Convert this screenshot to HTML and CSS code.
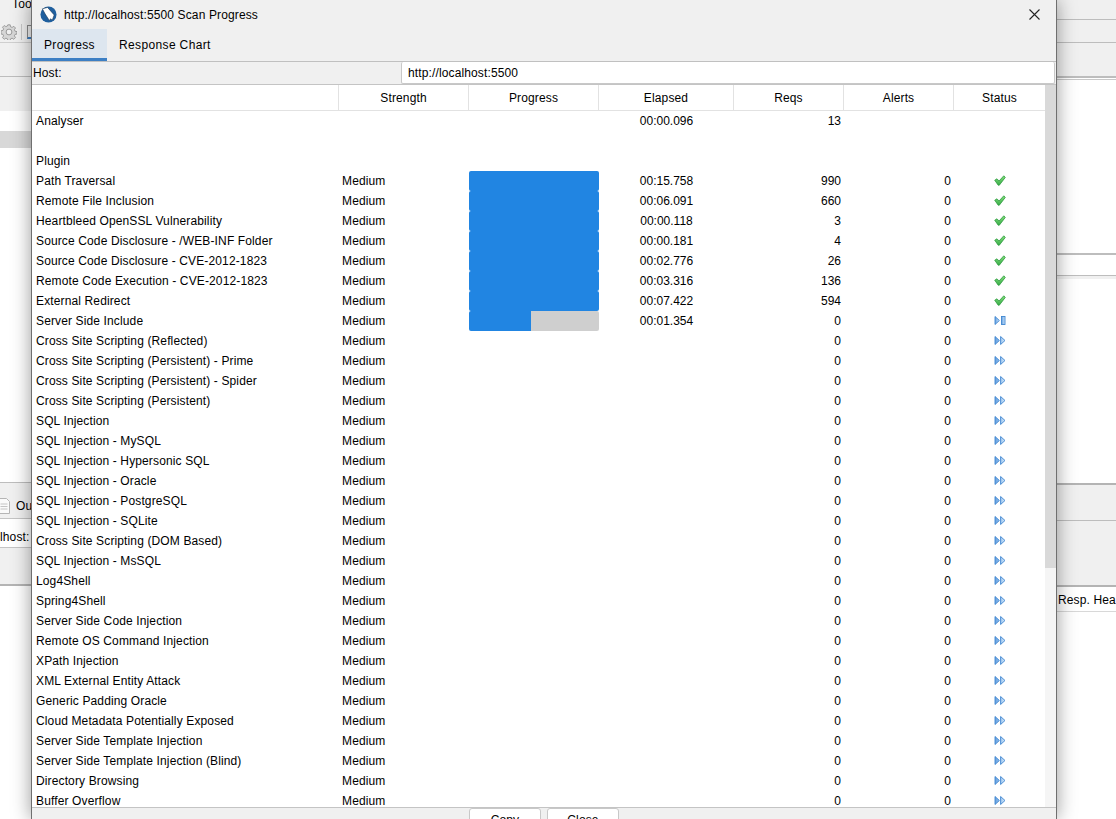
FILE: index.html
```html
<!DOCTYPE html>
<html lang="en">
<head>
<meta charset="utf-8">
<title>Scan Progress</title>
<link rel="stylesheet" href="styles.css">
</head>
<body>
<svg class="defs" width="0" height="0" aria-hidden="true">
  <defs>
    <linearGradient id="g" x1="0" y1="0" x2="0" y2="1"><stop offset="0" stop-color="#84de7c"/><stop offset="1" stop-color="#37ad48"/></linearGradient>
    <linearGradient id="b" x1="0" y1="0" x2="1" y2="0"><stop offset="0" stop-color="#639fe0"/><stop offset="1" stop-color="#d2e8fb"/></linearGradient>
    <symbol id="ok" viewBox="0 0 12 11"><path d="M0.7 5.2 L3 3.8 L5 6 L9.8 0.8 L11.3 2.4 L5.3 10.2 H4.2 Z" fill="url(#g)" stroke="#2f9a40" stroke-width=".8"/></symbol>
    <symbol id="pend" viewBox="0 0 12 10"><path d="M1 1 L5.400 5 L1 9 Z M6.600 1 L11 5 L6.600 9 Z" fill="url(#b)" stroke="#3f86d0" stroke-width=".9"/></symbol>
    <symbol id="run" viewBox="0 0 12 10"><path d="M1 1 L5.400 5 L1 9 Z" fill="url(#b)" stroke="#3f86d0" stroke-width=".9"/><rect x="7.500" y="1" width="3.500" height="8" fill="url(#b)" stroke="#3f86d0" stroke-width=".9"/></symbol>
  </defs>
</svg>
<div class="desk">
  <div class="pane left">
    <div class="band b-menu"><span class="clip-text">Tools</span></div>
    <div class="band b-tools">
      <svg class="gear" viewBox="0 0 16 16"><path d="M6.800.8h2.400l.4 2 1.500.6 1.700-1.100 1.700 1.700-1.100 1.700.6 1.500 2 .4v2.400l-2 .4-.6 1.500 1.100 1.700-1.700 1.700-1.700-1.100-1.500.6-.4 2H6.800l-.4-2-1.500-.6-1.700 1.100-1.700-1.700 1.100-1.700-.6-1.500-2-.4V6.800l2-.4.6-1.500L1.500 3.200l1.700-1.700 1.700 1.100 1.500-.6z" fill="#d6d6d6" stroke="#8e8e8e" stroke-width=".8"/><circle cx="8" cy="8" r="2.900" fill="#f0f0f0" stroke="#8e8e8e" stroke-width=".9"/></svg>
      <span class="tool-sep"></span>
      <span class="tool-stub"></span>
    </div>
    <div class="band b-l1"></div>
    <div class="band b-l2"></div>
    <div class="band b-l3"></div>
    <div class="band b-sel"></div>
    <div class="band b-l4"></div>
    <div class="band b-tabs">
      <svg class="doc" viewBox="0 0 12 16"><path d="M.5.5h8l3 3v12H.5z" fill="#fafafa" stroke="#b5b5b5"/><path d="M2.500 6h7M2.500 8.500h7M2.500 11h7" stroke="#c4c4c4"/></svg>
      <span class="tab-text">Ou</span>
    </div>
    <div class="band b-host"><span class="host-text">lhost:</span></div>
    <div class="band b-blank"></div>
    <div class="band b-white"></div>
  </div>
  <div class="pane right">
    <div class="band r1"></div>
    <div class="band r2"></div>
    <div class="band r3"></div>
    <div class="band r4"></div>
    <div class="band r5"></div>
    <div class="band r6"></div>
    <div class="band r6b"></div>
    <div class="band r7"></div>
    <div class="band r8"></div>
    <div class="band r9"></div>
    <div class="band r10">Resp. Hea</div>
    <div class="band r11"></div>
  </div>
</div>

<section class="dialog">
  <header class="titlebar">
    <svg class="logo" viewBox="0 0 18 18"><circle cx="9" cy="9" r="8.500" fill="#1f5f9e"/><path d="M2.500 3 L8 1.500 L15 9.500 L13 15 L11.200 13.500 L10 15.500 L5.500 8.500 Z" fill="#fff" stroke="#16324f" stroke-width=".6"/></svg>
    <span class="title">http://localhost:5500 Scan Progress</span>
    <svg class="close" viewBox="0 0 11 11"><path d="M.5.500 10.500 10.500M10.500.500 .500 10.500" stroke="#222" stroke-width="1.100" fill="none"/></svg>
  </header>
  <nav class="tabs">
    <span class="tab active">Progress</span>
    <span class="tab">Response Chart</span>
  </nav>
  <div class="hostrow">
    <label class="hostlabel">Host:</label>
    <div class="hostinput">http://localhost:5500</div>
  </div>
  <div class="tablewrap">
    <div class="table">
      <div class="row head"><span></span><span>Strength</span><span>Progress</span><span>Elapsed</span><span>Reqs</span><span>Alerts</span><span>Status</span></div>
      <div class="rows">
        <div class="row"><span class="name">Analyser</span><span></span><span></span><span class="time">00:00.096</span><span class="num">13</span><span></span><span></span></div>
        <div class="row"><span></span><span></span><span></span><span></span><span></span><span></span><span></span></div>
        <div class="row"><span class="name">Plugin</span><span></span><span></span><span></span><span></span><span></span><span></span></div>
        <div class="row"><span class="name">Path Traversal</span><span class="str">Medium</span><span class="prog"><i class="fill full"></i></span><span class="time">00:15.758</span><span class="num">990</span><span class="num">0</span><span class="st"><svg class="ic"><use href="#ok"/></svg></span></div>
        <div class="row"><span class="name">Remote File Inclusion</span><span class="str">Medium</span><span class="prog"><i class="fill full"></i></span><span class="time">00:06.091</span><span class="num">660</span><span class="num">0</span><span class="st"><svg class="ic"><use href="#ok"/></svg></span></div>
        <div class="row"><span class="name">Heartbleed OpenSSL Vulnerability</span><span class="str">Medium</span><span class="prog"><i class="fill full"></i></span><span class="time">00:00.118</span><span class="num">3</span><span class="num">0</span><span class="st"><svg class="ic"><use href="#ok"/></svg></span></div>
        <div class="row"><span class="name">Source Code Disclosure - /WEB-INF Folder</span><span class="str">Medium</span><span class="prog"><i class="fill full"></i></span><span class="time">00:00.181</span><span class="num">4</span><span class="num">0</span><span class="st"><svg class="ic"><use href="#ok"/></svg></span></div>
        <div class="row"><span class="name">Source Code Disclosure - CVE-2012-1823</span><span class="str">Medium</span><span class="prog"><i class="fill full"></i></span><span class="time">00:02.776</span><span class="num">26</span><span class="num">0</span><span class="st"><svg class="ic"><use href="#ok"/></svg></span></div>
        <div class="row"><span class="name">Remote Code Execution - CVE-2012-1823</span><span class="str">Medium</span><span class="prog"><i class="fill full"></i></span><span class="time">00:03.316</span><span class="num">136</span><span class="num">0</span><span class="st"><svg class="ic"><use href="#ok"/></svg></span></div>
        <div class="row"><span class="name">External Redirect</span><span class="str">Medium</span><span class="prog"><i class="fill full"></i></span><span class="time">00:07.422</span><span class="num">594</span><span class="num">0</span><span class="st"><svg class="ic"><use href="#ok"/></svg></span></div>
        <div class="row"><span class="name">Server Side Include</span><span class="str">Medium</span><span class="prog"><i class="fill part"></i></span><span class="time">00:01.354</span><span class="num">0</span><span class="num">0</span><span class="st"><svg class="ic"><use href="#run"/></svg></span></div>
        <div class="row"><span class="name">Cross Site Scripting (Reflected)</span><span class="str">Medium</span><span></span><span></span><span class="num">0</span><span class="num">0</span><span class="st"><svg class="ic"><use href="#pend"/></svg></span></div>
        <div class="row"><span class="name">Cross Site Scripting (Persistent) - Prime</span><span class="str">Medium</span><span></span><span></span><span class="num">0</span><span class="num">0</span><span class="st"><svg class="ic"><use href="#pend"/></svg></span></div>
        <div class="row"><span class="name">Cross Site Scripting (Persistent) - Spider</span><span class="str">Medium</span><span></span><span></span><span class="num">0</span><span class="num">0</span><span class="st"><svg class="ic"><use href="#pend"/></svg></span></div>
        <div class="row"><span class="name">Cross Site Scripting (Persistent)</span><span class="str">Medium</span><span></span><span></span><span class="num">0</span><span class="num">0</span><span class="st"><svg class="ic"><use href="#pend"/></svg></span></div>
        <div class="row"><span class="name">SQL Injection</span><span class="str">Medium</span><span></span><span></span><span class="num">0</span><span class="num">0</span><span class="st"><svg class="ic"><use href="#pend"/></svg></span></div>
        <div class="row"><span class="name">SQL Injection - MySQL</span><span class="str">Medium</span><span></span><span></span><span class="num">0</span><span class="num">0</span><span class="st"><svg class="ic"><use href="#pend"/></svg></span></div>
        <div class="row"><span class="name">SQL Injection - Hypersonic SQL</span><span class="str">Medium</span><span></span><span></span><span class="num">0</span><span class="num">0</span><span class="st"><svg class="ic"><use href="#pend"/></svg></span></div>
        <div class="row"><span class="name">SQL Injection - Oracle</span><span class="str">Medium</span><span></span><span></span><span class="num">0</span><span class="num">0</span><span class="st"><svg class="ic"><use href="#pend"/></svg></span></div>
        <div class="row"><span class="name">SQL Injection - PostgreSQL</span><span class="str">Medium</span><span></span><span></span><span class="num">0</span><span class="num">0</span><span class="st"><svg class="ic"><use href="#pend"/></svg></span></div>
        <div class="row"><span class="name">SQL Injection - SQLite</span><span class="str">Medium</span><span></span><span></span><span class="num">0</span><span class="num">0</span><span class="st"><svg class="ic"><use href="#pend"/></svg></span></div>
        <div class="row"><span class="name">Cross Site Scripting (DOM Based)</span><span class="str">Medium</span><span></span><span></span><span class="num">0</span><span class="num">0</span><span class="st"><svg class="ic"><use href="#pend"/></svg></span></div>
        <div class="row"><span class="name">SQL Injection - MsSQL</span><span class="str">Medium</span><span></span><span></span><span class="num">0</span><span class="num">0</span><span class="st"><svg class="ic"><use href="#pend"/></svg></span></div>
        <div class="row"><span class="name">Log4Shell</span><span class="str">Medium</span><span></span><span></span><span class="num">0</span><span class="num">0</span><span class="st"><svg class="ic"><use href="#pend"/></svg></span></div>
        <div class="row"><span class="name">Spring4Shell</span><span class="str">Medium</span><span></span><span></span><span class="num">0</span><span class="num">0</span><span class="st"><svg class="ic"><use href="#pend"/></svg></span></div>
        <div class="row"><span class="name">Server Side Code Injection</span><span class="str">Medium</span><span></span><span></span><span class="num">0</span><span class="num">0</span><span class="st"><svg class="ic"><use href="#pend"/></svg></span></div>
        <div class="row"><span class="name">Remote OS Command Injection</span><span class="str">Medium</span><span></span><span></span><span class="num">0</span><span class="num">0</span><span class="st"><svg class="ic"><use href="#pend"/></svg></span></div>
        <div class="row"><span class="name">XPath Injection</span><span class="str">Medium</span><span></span><span></span><span class="num">0</span><span class="num">0</span><span class="st"><svg class="ic"><use href="#pend"/></svg></span></div>
        <div class="row"><span class="name">XML External Entity Attack</span><span class="str">Medium</span><span></span><span></span><span class="num">0</span><span class="num">0</span><span class="st"><svg class="ic"><use href="#pend"/></svg></span></div>
        <div class="row"><span class="name">Generic Padding Oracle</span><span class="str">Medium</span><span></span><span></span><span class="num">0</span><span class="num">0</span><span class="st"><svg class="ic"><use href="#pend"/></svg></span></div>
        <div class="row"><span class="name">Cloud Metadata Potentially Exposed</span><span class="str">Medium</span><span></span><span></span><span class="num">0</span><span class="num">0</span><span class="st"><svg class="ic"><use href="#pend"/></svg></span></div>
        <div class="row"><span class="name">Server Side Template Injection</span><span class="str">Medium</span><span></span><span></span><span class="num">0</span><span class="num">0</span><span class="st"><svg class="ic"><use href="#pend"/></svg></span></div>
        <div class="row"><span class="name">Server Side Template Injection (Blind)</span><span class="str">Medium</span><span></span><span></span><span class="num">0</span><span class="num">0</span><span class="st"><svg class="ic"><use href="#pend"/></svg></span></div>
        <div class="row"><span class="name">Directory Browsing</span><span class="str">Medium</span><span></span><span></span><span class="num">0</span><span class="num">0</span><span class="st"><svg class="ic"><use href="#pend"/></svg></span></div>
        <div class="row"><span class="name">Buffer Overflow</span><span class="str">Medium</span><span></span><span></span><span class="num">0</span><span class="num">0</span><span class="st"><svg class="ic"><use href="#pend"/></svg></span></div>
      </div>
    </div>
    <div class="scrollbar"><div class="thumb"></div></div>
  </div>
  <footer class="foot">
    <button class="btn">Copy</button>
    <button class="btn">Close</button>
  </footer>
</section>
</body>
</html>
```
FILE: styles.css
```css
html, body { margin: 0; padding: 0; height: 819px; overflow: hidden; }
body { position: relative; width: 1116px; font: 12px/20px "Liberation Sans", Arial, sans-serif; letter-spacing: .13px; color: #000; background: #fff; }
.defs { position: absolute; }

.desk { display: flex; justify-content: space-between; height: 819px; }
.pane { display: flex; flex-direction: column; overflow: hidden; }
.left { width: 32px; }
.right { width: 59px; }
.band { box-sizing: border-box; flex: none; background: #f0f0f0; }

.b-menu { height: 20px; position: relative; overflow: hidden; }
.clip-text { position: absolute; left: 12px; top: -6px; }
.b-tools { height: 23px; border-bottom: 1px solid #cfcfcf; display: flex; align-items: center; padding: 3px 0 1px 1px; }
.gear { width: 16px; height: 16px; flex: none; }
.tool-sep { width: 1px; height: 16px; background: #c8c8c8; margin-left: 4px; flex: none; }
.tool-stub { width: 7px; height: 11px; border: 1px solid #8a8a8a; border-bottom: 2px solid #3c7fc4; margin-left: 5px; flex: none; }
.b-l1 { height: 34px; border-bottom: 1px solid #bdbdbd; }
.b-l2 { height: 34px; }
.b-l3 { height: 20px; background: #fff; }
.b-sel { height: 17px; background: #d8d8d8; }
.b-l4 { height: 335px; background: #fff; border-bottom: 1px solid #bdbdbd; }
.b-tabs { height: 36px; border-bottom: 1px solid #c4c4c4; display: flex; align-items: center; padding-top: 10px; overflow: hidden; }
.doc { width: 12px; height: 16px; margin-left: -2px; flex: none; }
.tab-text { margin-left: 6px; }
.b-host { height: 29px; background: #fff; border-bottom: 1px solid #c4c4c4; white-space: nowrap; }
.host-text { display: block; margin-top: 8px; }
.b-blank { height: 38px; border-bottom: 2px solid #b4b4b4; }
.b-white { flex: 1; background: #fff; }

.r1 { height: 20px; border-bottom: 1px solid #bdbdbd; }
.r2 { height: 23px; border-bottom: 1px solid #bdbdbd; }
.r3 { height: 35px; border-bottom: 2px solid #bdbdbd; }
.r4 { height: 2px; background: #fff; border-bottom: 1px solid #c8c8c8; }
.r5 { height: 175px; background: #fff; border-bottom: 2px solid #bdbdbd; }
.r6 { height: 21px; background: #fff; border-bottom: 1px solid #bdbdbd; }
.r6b { height: 3px; }
.r7 { height: 206px; background: #fff; border-bottom: 2px solid #b4b4b4; }
.r8 { height: 36px; border-bottom: 1px solid #bdbdbd; }
.r9 { height: 66px; border-bottom: 2px solid #b4b4b4; }
.r10 { height: 25px; background: #fff; border-bottom: 1px solid #d8d8d8; padding-left: 1px; line-height: 26px; white-space: nowrap; }
.r11 { flex: 1; background: #fff; }

.dialog { position: absolute; left: 31px; top: 0; width: 1026px; height: 819px; box-sizing: border-box; border-left: 1px solid #6f6f6f; border-right: 1px solid #6f6f6f; background: #f0f0f0; box-shadow: 0 0 18px rgba(0,0,0,.4); display: flex; flex-direction: column; overflow: hidden; }
.titlebar { flex: none; height: 29px; display: flex; align-items: center; }
.logo { width: 17px; height: 17px; margin-left: 8px; flex: none; }
.title { margin-left: 7px; flex: 1; }
.close { width: 11px; height: 11px; margin-right: 16px; flex: none; }
.tabs { flex: none; height: 33px; box-sizing: border-box; border-bottom: 1px solid #c0c0c0; display: flex; }
.tab { padding: 0 12px; line-height: 32px; height: 32px; box-sizing: border-box; letter-spacing: .36px; }
.tab.active { width: 75px; background: #dde6ef; border-bottom: 3px solid #3c7fc4; }
.hostrow { flex: none; height: 22px; display: flex; }
.hostlabel { width: 368px; padding-left: 1px; line-height: 23px; flex: none; }
.hostinput { flex: 1; box-sizing: border-box; background: #fff; border: 1px solid #c8c8c8; border-top: 0; border-radius: 2px; padding-left: 6px; margin-right: 1px; line-height: 22px; }
.tablewrap { flex: none; height: 722px; display: flex; border-top: 1px solid #c4c4c4; overflow: hidden; }
.table { flex: none; width: 1013px; background: #fff; }
.row { display: grid; grid-template-columns: 307px 130px 130px 135px 110px 110px 91px; height: 20px; }
.row > span { display: block; min-width: 0; white-space: nowrap; box-sizing: border-box; }
.head { height: 25px; border-bottom: 1px solid #e2e2e2; line-height: 26px; text-align: center; }
.head > span { border-right: 1px solid #e2e2e2; }
.head > span:last-child { border-right: 0; }
.name { padding-left: 4px; }
.str { padding-left: 3px; }
.time { text-align: center; letter-spacing: 0; }
.num { text-align: right; padding-right: 3px; letter-spacing: 0; }
.st { text-align: center; }
.fill { display: block; height: 20px; border-radius: 2px; }
.full { background: #2185e2; }
.part { background: linear-gradient(to right, #2185e2 62px, #cfcfcf 62px); }
.ic { width: 12px; height: 11px; display: inline-block; vertical-align: -1px; }
.scrollbar { flex: 1; background: #f5f5f5; }
.thumb { height: 483px; background: #d9d9d9; }
.foot { flex: 1; border-top: 1px solid #c4c4c4; display: flex; justify-content: center; gap: 6px; }
.btn { width: 72px; height: 24px; padding: 0; background: #fff; border: 1px solid #c8c8c8; border-radius: 3px; font: inherit; letter-spacing: inherit; color: #000; flex: none; }
```
